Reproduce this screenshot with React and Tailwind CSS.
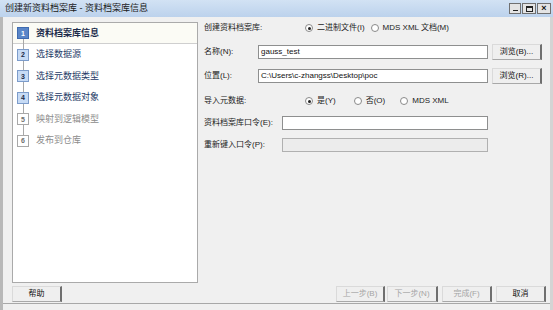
import React from 'react';

const steps = [
  { n: 1, label: '资料档案库信息', state: 'active' },
  { n: 2, label: '选择数据源', state: 'todo' },
  { n: 3, label: '选择元数据类型', state: 'todo' },
  { n: 4, label: '选择元数据对象', state: 'todo' },
  { n: 5, label: '映射到逻辑模型', state: 'off' },
  { n: 6, label: '发布到仓库', state: 'off' },
];

const Radio = ({ checked, label, className = '' }) => (
  <div className={`flex items-center gap-[4px] ${className}`}>
    <span className="w-[8px] h-[8px] rounded-full border border-[#8a8a8a] bg-white flex items-center justify-center">
      {checked && <span className="w-[3px] h-[3px] rounded-full bg-[#222]" />}
    </span>
    <span className="text-[8px] leading-none text-[#222]">{label}</span>
  </div>
);

const Field = ({ value = '', disabled, className = '' }) => (
  <div
    className={`h-[14px] border border-[#8e8f8f] flex items-center pl-[2px] text-[8px] leading-none text-[#111] ${
      disabled ? 'bg-[#ececec] border-[#b0b0b0]' : 'bg-white'
    } ${className}`}
  >
    {value}
  </div>
);

const Button = ({ label, disabled, className = '' }) => (
  <div
    className={`h-[16px] flex items-center justify-center text-[8px] leading-none bg-[#efefef] border border-[#dadada] border-r-2 border-r-[#6f6f6f] border-b-[#a8a8a8] ${
      disabled ? 'text-[#a5a5a5]' : 'text-[#111]'
    } ${className}`}
  >
    {label}
  </div>
);

const StepBox = ({ n, state }) => {
  const styles = {
    active: 'bg-[#5a86c8] border-[#3f6bb0] text-white',
    todo: 'bg-[#c7dbf5] border-[#7c9ccb] text-[#1b2a48]',
    off: 'bg-white border-[#a8a8a8] text-[#707070]',
  };
  return (
    <span
      className={`relative z-10 w-[12px] h-[12px] border flex items-center justify-center text-[7px] font-bold leading-none ${styles[state]}`}
    >
      {n}
    </span>
  );
};

export default function App() {
  return (
    <div className="w-[553px] h-[310px] overflow-hidden bg-[#f0f0f0] flex flex-col font-['Liberation_Sans','Noto_Sans_CJK_SC',sans-serif] text-[#222]">
      {/* Title bar */}
      <div className="h-[17px] shrink-0 bg-gradient-to-b from-[#d2e2f4] to-[#bcd2ec] flex items-center justify-between pl-[5px] pr-[2px]">
        <span className="text-[9px] leading-none text-[#1a1a1a]">创建新资料档案库 - 资料档案库信息</span>
        <div className="flex items-center gap-[1px]">
          <span className="w-[12px] h-[11px] bg-[#e4e4e4] border border-[#707070] flex items-end justify-center pb-[2px]">
            <span className="w-[5px] h-[1px] bg-[#222]" />
          </span>
          <span className="w-[14px] h-[11px] bg-[#e4e4e4] border border-[#707070] flex items-center justify-center">
            <span className="w-[7px] h-[6px] border border-[#222] border-t-2" />
          </span>
          <span className="w-[14px] h-[11px] bg-[#e4e4e4] border border-[#707070] flex items-center justify-center text-[9px] font-bold leading-none text-[#111]">
            ×
          </span>
        </div>
      </div>

      {/* Body */}
      <div className="flex-1 flex flex-col border-l-[3px] border-l-[#b8b8b8] border-r-[3px] border-r-[#d4d4d4]">
        <div className="flex pt-[5px] pl-[9px]">
          {/* Steps panel */}
          <div className="w-[186px] h-[261px] bg-white border border-[#aaaaaa] shrink-0">
            <div className="relative">
              <span className="absolute left-[10px] top-[16px] w-px h-[96px] bg-[#a8a8a8]" />
              {steps.map((s) =>
                s.state === 'active' ? (
                  <div
                    key={s.n}
                    className="h-[21px] flex items-center pl-[4px] gap-[7px] bg-[#fbfbf5] border-b border-[#cfcfcf]"
                  >
                    <StepBox n={s.n} state={s.state} />
                    <span className="text-[9px] font-bold leading-none text-[#1a2a4a]">{s.label}</span>
                  </div>
                ) : (
                  <div key={s.n} className="h-[21.5px] flex items-center pl-[4px] gap-[7px]">
                    <StepBox n={s.n} state={s.state} />
                    <span
                      className={`text-[9px] leading-none ${
                        s.state === 'todo' ? 'text-[#243a66]' : 'text-[#8c8c8c]'
                      }`}
                    >
                      {s.label}
                    </span>
                  </div>
                )
              )}
            </div>
          </div>

          {/* Form */}
          <div className="ml-[6px] flex flex-col text-[8px] leading-none">
            <div className="h-[12px] flex items-center">
              <span className="w-[101px]">创建资料档案库:</span>
              <Radio checked label="二进制文件(I)" />
              <Radio label="MDS XML 文档(M)" className="ml-[6px]" />
            </div>

            <div className="mt-[10px] flex items-center">
              <span className="w-[54px]">名称(N):</span>
              <Field value="gauss_test" className="w-[230px]" />
              <Button label="浏览(B)..." className="w-[50px] ml-[4px] h-[15px]" />
            </div>

            <div className="mt-[8px] flex items-center">
              <span className="w-[54px]">位置(L):</span>
              <Field value="C:\Users\c-zhangss\Desktop\poc" className="w-[230px]" />
              <Button label="浏览(R)..." className="w-[50px] ml-[4px] h-[15px]" />
            </div>

            <div className="mt-[11px] h-[12px] flex items-center">
              <span className="w-[101px]">导入元数据:</span>
              <Radio checked label="是(Y)" />
              <Radio label="否(O)" className="ml-[18px]" />
              <Radio label="MDS XML" className="ml-[15px]" />
            </div>

            <div className="mt-[9px] flex items-center">
              <span className="w-[78px]">资料档案库口令(E):</span>
              <Field className="w-[206px]" />
            </div>

            <div className="mt-[8px] flex items-center">
              <span className="w-[78px]">重新键入口令(P):</span>
              <Field disabled className="w-[206px]" />
            </div>
          </div>
        </div>

        {/* Button row */}
        <div className="mt-[3px] flex items-center pl-[9px]">
          <Button label="帮助" className="w-[50px]" />
          <div className="ml-auto flex items-center mr-[4px]">
            <Button label="上一步(B)" disabled className="w-[49px]" />
            <Button label="下一步(N)" disabled className="w-[51px] ml-[2px]" />
            <Button label="完成(F)" disabled className="w-[50px] ml-[4px]" />
            <Button label="取消" className="w-[50px] ml-[4px]" />
          </div>
        </div>

        {/* Status bar */}
        <div className="mt-[1px] border-t border-[#a8a8a8] flex-1 pl-[1px] pt-[2px] overflow-hidden">
          <span className="text-[9px] leading-none text-[#111]">使用帮助, 请按 F1</span>
        </div>
      </div>
    </div>
  );
}
